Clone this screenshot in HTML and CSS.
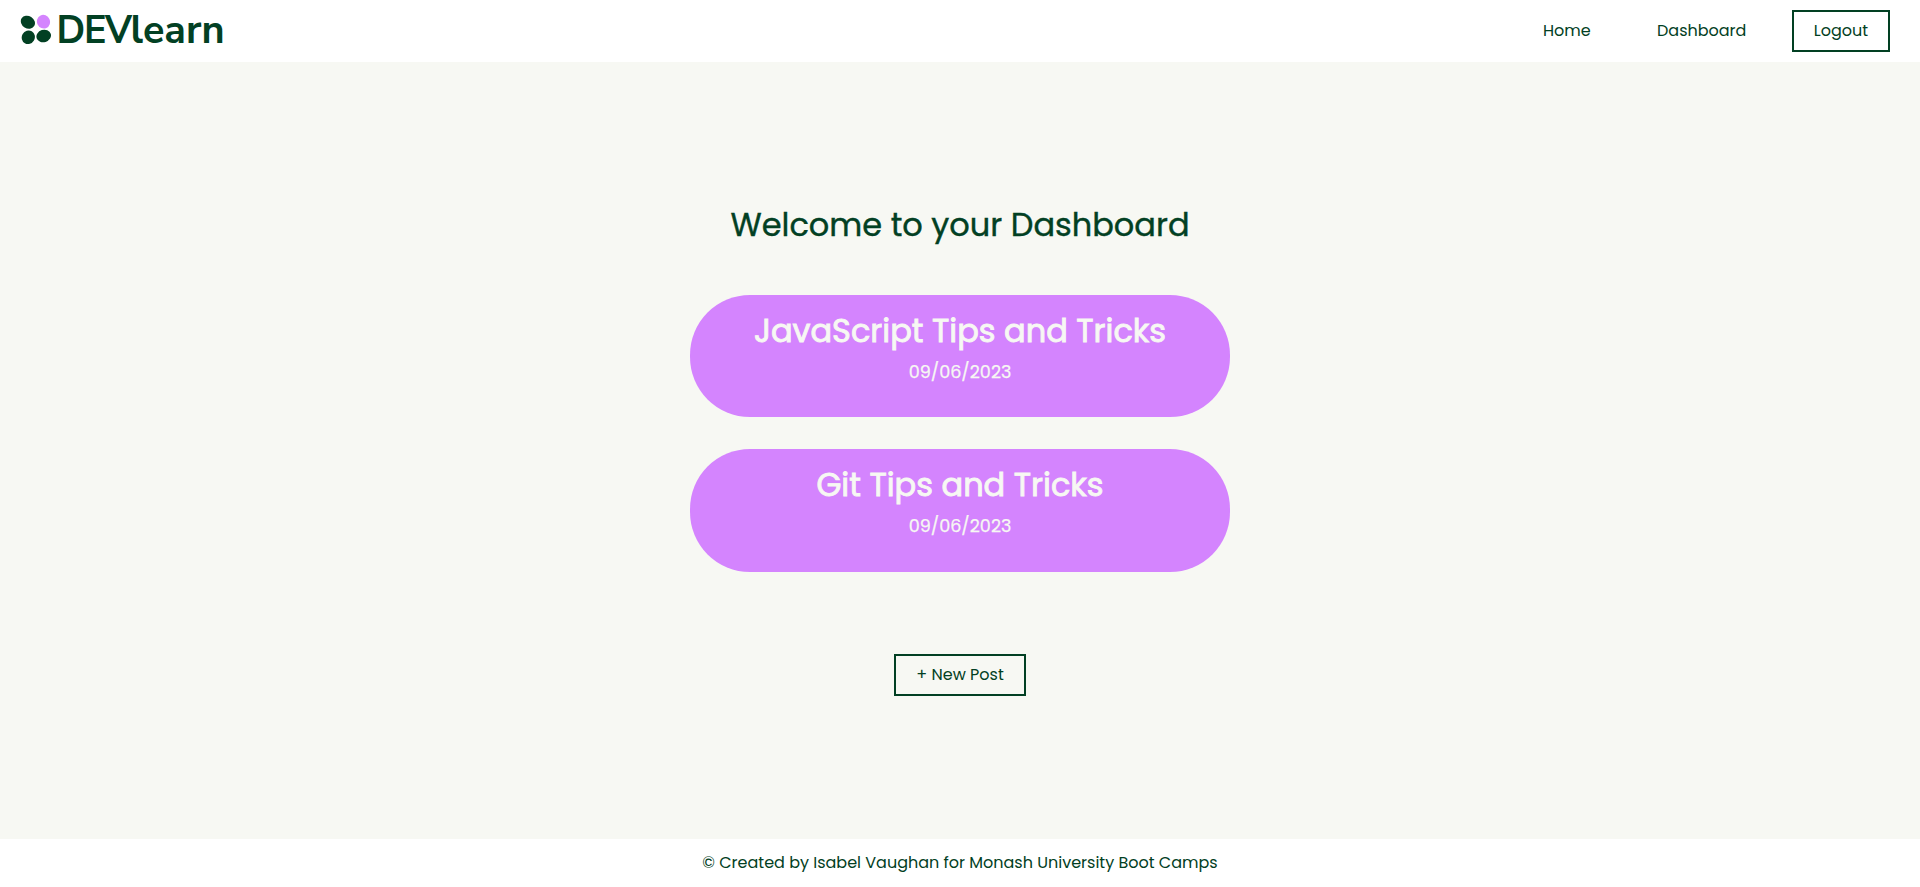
FILE: index.html
```html
<!DOCTYPE html>
<html lang="en">
<head>
  <meta charset="utf-8">
  <title>DEVlearn</title>
  <link rel="stylesheet" href="styles.css">
</head>
<body>
  <header class="header">
    <a class="logo">
      <svg class="logo-mark" width="32" height="32" viewBox="20 14 32 32" aria-hidden="true">
        <ellipse cx="27.9" cy="22.2" rx="7.4" ry="6.2" transform="rotate(32 27.9 22.2)" fill="#024023"/>
        <ellipse cx="43.5" cy="21.7" rx="6.5" ry="6.9" transform="rotate(-25 43.5 21.7)" fill="#d484fe"/>
        <ellipse cx="28.3" cy="37.3" rx="6.5" ry="6.9" transform="rotate(30 28.3 37.3)" fill="#024023"/>
        <ellipse cx="43.7" cy="36" rx="7.4" ry="6.2" transform="rotate(-18 43.7 36)" fill="#024023"/>
      </svg>
      <span class="logo-dev">DEV</span><span class="logo-learn">learn</span>
    </a>
    <nav class="nav">
      <a class="link link-home">Home</a>
      <a class="link link-dashboard">Dashboard</a>
      <a class="button button-logout">Logout</a>
    </nav>
  </header>
  <main class="main">
    <h1 class="heading">Welcome to your Dashboard</h1>
    <section class="posts">
      <article class="post">
        <h2 class="post-title">JavaScript Tips and Tricks</h2>
        <p class="post-date">09/06/2023</p>
      </article>
      <article class="post">
        <h2 class="post-title">Git Tips and Tricks</h2>
        <p class="post-date">09/06/2023</p>
      </article>
    </section>
    <a class="button button-new">+ New Post</a>
  </main>
  <footer class="footer">© Created by Isabel Vaughan for Monash University Boot Camps</footer>
</body>
</html>
```

FILE: styles.css
```css
* { box-sizing: border-box; }
body {
  margin: 0;
  height: 887px;
  display: flex;
  flex-direction: column;
  background: #f7f8f3;
  color: #024023;
  font-family: Poppins, Inter, sans-serif;
  font-size: 16px;
  line-height: 24px;
}
.header {
  height: 62px;
  flex: none;
  display: flex;
  justify-content: space-between;
  align-items: flex-start;
  padding: 0 30px 0 20px;
  background: #fff;
}
.logo {
  display: flex;
  font-family: "Nunito Sans", Lato, sans-serif;
  font-size: 39.5px;
  font-weight: 700;
  line-height: 48px;
  padding-top: 6px;
}
.logo-mark { margin: 8px 1px 0 0; }
.logo-dev {
  letter-spacing: -1.4px;
  transform: scaleX(0.955);
  transform-origin: right;
}
.logo-learn { letter-spacing: 0; }
.nav { display: flex; align-items: center; padding-top: 10px; }
.link-home { width: 49px; margin-right: 65px; }
.link-dashboard { width: 90px; margin-right: 45px; }
.button {
  height: 42px;
  border: 2px solid #024023;
  padding: 7px 0 0;
  text-align: center;
}
.button-logout { width: 98px; }
.button-new { width: 132px; margin-top: 82px; }
.main {
  flex: 1;
  display: flex;
  flex-direction: column;
  align-items: center;
  padding-top: 143px;
}
.heading {
  margin: 0 0 49.6px;
  font-size: 32px;
  font-weight: 400;
  line-height: 40px;
  -webkit-text-stroke: 0.4px;
}
.posts { display: flex; flex-direction: column; gap: 32px; }
.post {
  width: 540px;
  height: 122.5px;
  padding-top: 16px;
  border-radius: 60px;
  background: #d484fe;
  color: #f7f8f3;
  text-align: center;
}
.post-title {
  margin: 0;
  font-size: 32px;
  font-weight: 400;
  line-height: 40px;
  -webkit-text-stroke: 0.9px;
}
.post-date {
  margin: 8px 0 0;
  font-size: 17.6px;
  font-weight: 400;
  line-height: 26px;
  -webkit-text-stroke: 0.25px;
}
.footer {
  height: 48px;
  flex: none;
  padding-top: 12px;
  background: #fff;
  text-align: center;
}
```
